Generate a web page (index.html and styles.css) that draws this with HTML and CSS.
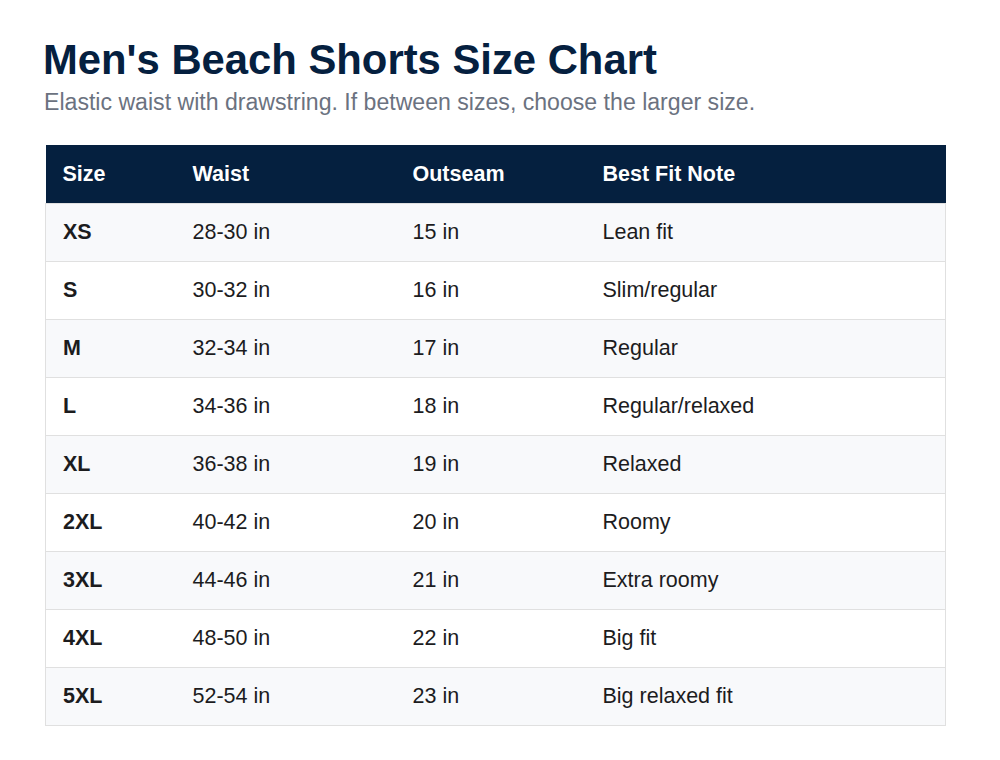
FILE: index.html
```html
<!DOCTYPE html>
<html lang="en">
<head>
<meta charset="utf-8">
<title>Men's Beach Shorts Size Chart</title>
<link rel="stylesheet" href="styles.css">
</head>
<body>
<main class="page">
  <h1 class="title">Men's Beach Shorts Size Chart</h1>
  <p class="subtitle">Elastic waist with drawstring. If between sizes, choose the larger size.</p>
  <table class="chart">
    <colgroup>
      <col class="c-size"><col class="c-waist"><col class="c-out"><col class="c-note">
    </colgroup>
    <thead>
      <tr><th>Size</th><th>Waist</th><th>Outseam</th><th>Best Fit Note</th></tr>
    </thead>
    <tbody>
      <tr><td class="sz">XS</td><td>28-30 in</td><td>15 in</td><td>Lean fit</td></tr>
      <tr><td class="sz">S</td><td>30-32 in</td><td>16 in</td><td>Slim/regular</td></tr>
      <tr><td class="sz">M</td><td>32-34 in</td><td>17 in</td><td>Regular</td></tr>
      <tr><td class="sz">L</td><td>34-36 in</td><td>18 in</td><td>Regular/relaxed</td></tr>
      <tr><td class="sz">XL</td><td>36-38 in</td><td>19 in</td><td>Relaxed</td></tr>
      <tr><td class="sz">2XL</td><td>40-42 in</td><td>20 in</td><td>Roomy</td></tr>
      <tr><td class="sz">3XL</td><td>44-46 in</td><td>21 in</td><td>Extra roomy</td></tr>
      <tr><td class="sz">4XL</td><td>48-50 in</td><td>22 in</td><td>Big fit</td></tr>
      <tr><td class="sz">5XL</td><td>52-54 in</td><td>23 in</td><td>Big relaxed fit</td></tr>
    </tbody>
  </table>
</main>
</body>
</html>
```
FILE: styles.css
```css
html, body {
  margin: 0;
  padding: 0;
  background: #ffffff;
}
body {
  font-family: "Liberation Sans", Arial, sans-serif;
  color: #1c1c1e;
}
.page {
  padding: 34px 54px 0 45px;
}
.title {
  margin: 0 0 0 -2px;
  font-size: 41.8px;
  line-height: 52px;
  font-weight: 700;
  color: #05203f;
}
.subtitle {
  margin: 2px 0 28px -1px;
  font-size: 23.1px;
  line-height: 29px;
  color: #6b7280;
}
.chart {
  width: 901px;
  border-collapse: collapse;
  table-layout: fixed;
  font-size: 21.5px;
}
.c-size { width: 130px; }
.c-waist { width: 220px; }
.c-out { width: 190px; }
.chart th {
  background: #05203f;
  color: #ffffff;
  font-weight: 700;
  text-align: left;
  height: 58px;
  padding: 0 17px;
}
.chart td {
  height: 57px;
  padding: 0 17px;
  border: 1px solid #e0e0e0;
  border-left: none;
  border-right: none;
}
.chart td:first-child { border-left: 1px solid #e0e0e0; }
.chart td:last-child { border-right: 1px solid #e0e0e0; }
.chart tbody tr:nth-child(odd) { background: #f8f9fb; }
.chart .sz { font-weight: 700; }
```
